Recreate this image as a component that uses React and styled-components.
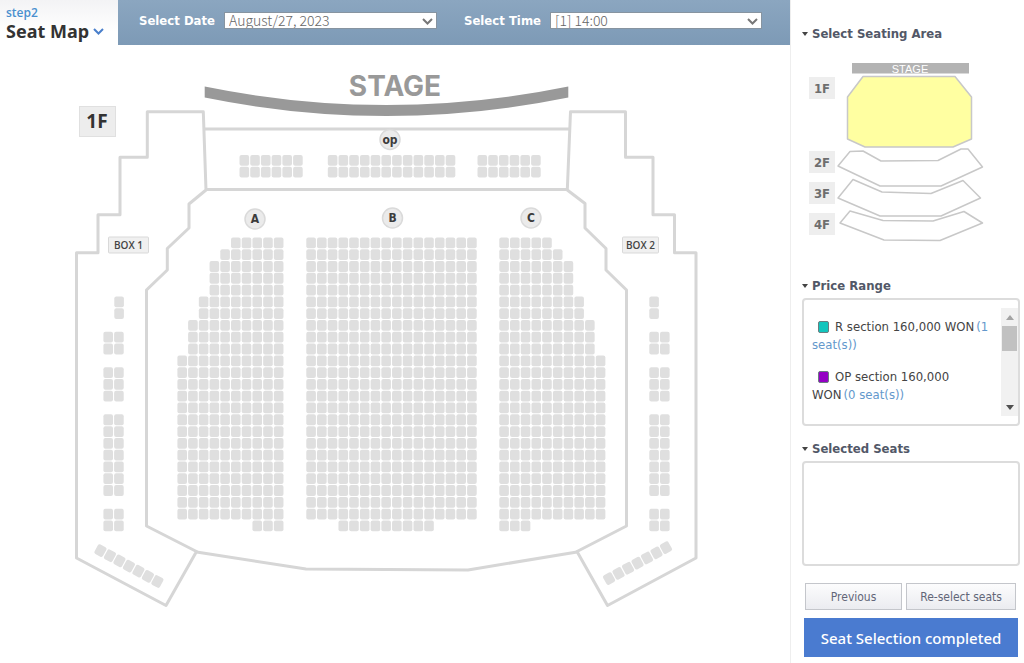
import React, { useState } from "react";
import styled, { createGlobalStyle } from "styled-components";

const GlobalStyle = createGlobalStyle`
  * {
    box-sizing: border-box;
  }
  body {
    margin: 0;
    background: #fff;
    color: #444;
    font-family: "DejaVu Sans Condensed", "DejaVu Sans", sans-serif;
    font-size: 13px;
  }
`;

const Page = styled.div`
  display: flex;
  min-height: 100vh;
`;

const Main = styled.main`
  flex: 1;
  min-width: 0;
`;

const TopBar = styled.header`
  display: flex;
  height: 45px;
`;

const Step = styled.div`
  flex: none;
  width: 118px;
  padding: 5px 0 0 6px;
  background: linear-gradient(#f3f3f5, #fff 32px);
`;

const StepNumber = styled.div`
  font-family: "Open Sans", sans-serif;
  font-size: 12px;
  font-weight: 600;
  line-height: 16px;
  color: #4a90cf;
`;

const StepTitle = styled.h1`
  display: flex;
  align-items: center;
  gap: 4px;
  margin: 0;
  font-family: "Noto Sans", sans-serif;
  font-size: 18px;
  font-weight: 700;
  line-height: 20px;
  color: #333;
  white-space: nowrap;
`;

const Filters = styled.div`
  flex: 1;
  display: flex;
  align-items: center;
  gap: 27px;
  min-width: 0;
  padding: 0 27px 4px 21px;
  background: linear-gradient(#8ba6c0, #7d9ab6);
`;

const Field = styled.label`
  flex: 0 1 298px;
  display: flex;
  align-items: center;
  gap: 9px;
  min-width: 0;
  font-size: 13px;
  font-weight: 700;
  color: #fff;
  white-space: nowrap;
`;

const SelectBox = styled.span`
  position: relative;
  flex: 1;
  display: flex;
  min-width: 0;
  svg {
    position: absolute;
    right: 4px;
    top: 6px;
    pointer-events: none;
  }
`;

const Select = styled.select`
  appearance: none;
  width: 100%;
  height: 17px;
  padding: 0 20px 0 4px;
  border: 1px solid #8794a0;
  border-radius: 0;
  background: #fff;
  color: #666;
  font-family: "Noto Sans CJK KR", sans-serif;
  font-size: 14px;
  font-weight: 300;
  line-height: 15px;
`;

const MapSvg = styled.svg`
  display: block;
  width: 100%;
  height: auto;
`;

const Sidebar = styled.aside`
  flex: none;
  width: 234px;
  padding: 25px 4px 0 11px;
  border-left: 1px solid #eee;
`;

const Heading = styled.h2`
  display: flex;
  align-items: center;
  gap: 4px;
  margin: 0 0 3px;
  font-size: 13px;
  font-weight: 700;
  line-height: 18px;
  color: #525868;
  &::before {
    content: "";
    border: 3px solid transparent;
    border-top: 4px solid #444;
    border-bottom: 0;
  }
`;

const MiniMap = styled.div`
  padding: 10px 0 29px;
`;

const Panel = styled.div`
  display: flex;
  height: ${(props) => props.$height}px;
  margin-bottom: ${(props) => props.$after}px;
  border: 2px solid #dcdcdc;
  border-radius: 4px;
`;

const Prices = styled.ul`
  flex: 1;
  display: flex;
  flex-direction: column;
  gap: 14px;
  margin: 8px 0;
  padding: 10px 8px 0;
  overflow: hidden;
  list-style: none;
  line-height: 18px;
`;

const Swatch = styled.span`
  display: inline-block;
  width: 11px;
  height: 12px;
  margin: 0 6px;
  border: 1px solid #6b7d80;
  border-radius: 2px;
  background: ${(props) => props.$color};
  vertical-align: -2px;
`;

const Count = styled.span`
  padding-left: 2px;
  color: #6398cc;
`;

const ScrollBar = styled.div`
  display: flex;
  flex-direction: column;
  width: 17px;
  margin: 8px 0;
  background: #f1f1f1;
`;

const ScrollButton = styled.button`
  display: flex;
  align-items: center;
  justify-content: center;
  height: 18px;
  padding: 0;
  border: 0;
  background: none;
`;

const Thumb = styled.div`
  height: 25px;
  margin: 0 1px auto;
  background: #c1c1c1;
`;

const Actions = styled.div`
  display: flex;
  gap: 4px;
  padding: 0 4px 0 3px;
`;

const Button = styled.button`
  flex: ${(props) => props.$grow} 1 0;
  height: 27px;
  padding: 0;
  border: 1px solid #c4c6cb;
  background: linear-gradient(#fcfcfd, #ebecf0);
  color: #626678;
  font-family: inherit;
  font-size: 12px;
`;

const Submit = styled.button`
  display: block;
  width: calc(100% - 4px);
  height: 39px;
  margin: 8px 2px 6px;
  padding: 0;
  border: 0;
  background: #4a7bd0;
  color: #fff;
  font-family: "Noto Sans", sans-serif;
  font-size: 15px;
  font-weight: 500;
`;

const COL = 10.72;
const ROW = 11.79;
const TOP = 237.5;

const wing = [5, 6, 7, 7, 7, 8, 8, 9, 9, 9, ...Array(14).fill(10), 3];
const seats = [];

const addRow = (x, y, count) => {
  for (let i = 0; i < count; i++) seats.push([x + i * COL, y]);
};

// stalls A, B and C
wing.forEach((count, row) => {
  const y = TOP + row * ROW;
  addRow(284.6 - count * COL, y, count);
  addRow(499.3, y, count);
  if (row < 24) addRow(306.3, y, 16);
  else addRow(306.3 + 3 * COL, y, 9);
});

// orchestra pit
[155, 166.8].forEach((y) => {
  addRow(239.5, y, 6);
  addRow(327.8, y, 12);
  addRow(477.5, y, 6);
});

// side boxes
[5, 6].forEach((row) => {
  addRow(114.3, TOP + row * ROW, 1);
  addRow(649.3, TOP + row * ROW, 1);
});
[8, 9, 11, 12, 13, 15, 16, 17, 18, 19, 20, 21, 23, 24].forEach((row) => {
  addRow(103.4, TOP + row * ROW, 2);
  addRow(649.3, TOP + row * ROW, 2);
});

const Chevron = ({ color }) => (
  <svg width="11" height="7" viewBox="0 0 11 7" fill="none" stroke={color} strokeWidth="2">
    <path d="M1 1l4.5 4.5L10 1" />
  </svg>
);

const Seat = ({ x, y }) => <rect x={x} y={y} width="9.6" height="10.8" rx="2" />;

const Badge = ({ x, y, children }) => (
  <g>
    <circle cx={x} cy={y} r="10" fill="#ebebeb" stroke="#dadada" strokeWidth="1.5" />
    <text x={x} y={y + 4} fontSize="12" fontWeight="700" textAnchor="middle" fill="#3c3c3c">
      {children}
    </text>
  </g>
);

const BoxLabel = ({ x, width, children }) => (
  <g>
    <rect x={x} y="237" width={width} height="16" rx="1" fill="#f0f0f0" stroke="#d9d9d9" />
    <text x={x + width / 2} y="249" fontFamily="Open Sans" fontSize="10" fontWeight="600" textAnchor="middle" fill="#444">
      {children}
    </text>
  </g>
);

const SeatMap = () => (
  <MapSvg viewBox="0 45 790 618" role="img" aria-label="Seat map, first floor">
    <text x="395" y="96" fontFamily="Inter" fontSize="28" fontWeight="700" textAnchor="middle" fill="#999">
      STAGE
    </text>
    <path d="M204.7 86.5Q386.5 123.5 568.3 86.5V97.5Q386.5 134.5 204.7 97.5Z" fill="#999" />
    <rect x="79.5" y="106.5" width="36" height="30" fill="#ededed" stroke="#e0e0e0" />
    <text x="97" y="128" fontFamily="Noto Sans" fontSize="19" fontWeight="700" textAnchor="middle" fill="#333">
      1F
    </text>
    <g fill="none" stroke="#d6d6d6" strokeWidth="3" strokeLinejoin="round">
      <path d="M147.3 111.7H203.3L206 190L189 204V228L167.3 248.5V270L146.5 290V526L196.5 551.5L166 605.5L76.5 558V252.7H98V214.7H120V157.3H147.3Z" />
      <path d="M625.5 111.7H570.5L567.3 190L585 203.5V228L606 248.5V270L626.5 290V526L577 551.5L607.5 605.5L696 558V252.7H674.5V214.7H653V157.3H625.5Z" />
      <path d="M204 129H569M206 189.5H567M196.5 552L306 569L468 570L577 552" />
    </g>
    <g fill="#dfdfdf">
      {seats.map(([x, y]) => (
        <Seat key={`${x}-${y}`} x={x} y={y} />
      ))}
      <g transform="translate(100.5 550.5) rotate(28.5)">
        {[0, 1, 2, 3, 4, 5, 6].map((i) => (
          <Seat key={i} x={i * 10.8 - 4.8} y={-5.3} />
        ))}
      </g>
      <g transform="translate(609 578.5) rotate(-28.5)">
        {[0, 1, 2, 3, 4, 5, 6].map((i) => (
          <Seat key={i} x={i * 10.8 - 4.8} y={-5.3} />
        ))}
      </g>
    </g>
    <Badge x={390} y={139.5}>op</Badge>
    <Badge x={255} y={219}>A</Badge>
    <Badge x={392.5} y={218}>B</Badge>
    <Badge x={531} y={218}>C</Badge>
    <BoxLabel x={108.5} width={40}>BOX 1</BoxLabel>
    <BoxLabel x={622.5} width={36}>BOX 2</BoxLabel>
  </MapSvg>
);

const floors = [
  { name: "1F", y: 77, points: "863,76.5 955,76.5 971.5,97 971.5,139 953,147 865,147 847.5,139 847.5,97" },
  { name: "2F", y: 151, points: "838,166 850,151.5 863,151 881,161 938,160.5 961,149 968,149 982.5,167 941,186 880,186" },
  { name: "3F", y: 182, points: "838,198 853,179.5 882,192 931,193.5 963,180.5 980.5,198 941,216 880,216" },
  { name: "4F", y: 213, points: "840,223 850,211 883,220.5 933,221 964,211.5 982.5,223 940,240.5 884,240" },
];

const FloorMap = () => (
  <MapSvg viewBox="802 56 218 192" role="img" aria-label="Seating areas">
    <rect x="852" y="63" width="117" height="10.5" fill="#b3b3b3" />
    <text x="910" y="73" fontFamily="Liberation Sans" fontSize="11" textAnchor="middle" fill="#fff">
      STAGE
    </text>
    {floors.map((floor) => (
      <g key={floor.name}>
        <rect x="809" y={floor.y} width="26" height="22" fill="#eee" />
        <text x="822" y={floor.y + 16} fontSize="13" fontWeight="700" textAnchor="middle" fill="#6e6e6e">
          {floor.name}
        </text>
        <polygon
          points={floor.points}
          fill={floor.name === "1F" ? "#ffffa1" : "#fff"}
          stroke="#c8c8c8"
          strokeWidth="1.5"
          strokeLinejoin="round"
        />
      </g>
    ))}
  </MapSvg>
);

const prices = [
  { name: "R section 160,000 WON", count: 1, color: "#12c5bd" },
  { name: "OP section 160,000 WON", count: 0, color: "#9400c4" },
];

export default function App() {
  const [date, setDate] = useState("August/27, 2023");
  const [time, setTime] = useState("[1] 14:00");

  return (
    <Page>
      <GlobalStyle />
      <Main>
        <TopBar>
          <Step>
            <StepNumber>step2</StepNumber>
            <StepTitle>
              Seat Map <Chevron color="#4a7fcb" />
            </StepTitle>
          </Step>
          <Filters>
            <Field>
              Select Date
              <SelectBox>
                <Select value={date} onChange={(e) => setDate(e.target.value)}>
                  <option>August/27, 2023</option>
                </Select>
                <Chevron color="#777" />
              </SelectBox>
            </Field>
            <Field>
              Select Time
              <SelectBox>
                <Select value={time} onChange={(e) => setTime(e.target.value)}>
                  <option>[1] 14:00</option>
                </Select>
                <Chevron color="#777" />
              </SelectBox>
            </Field>
          </Filters>
        </TopBar>
        <SeatMap />
      </Main>
      <Sidebar>
        <Heading>Select Seating Area</Heading>
        <MiniMap>
          <FloorMap />
        </MiniMap>
        <Heading>Price Range</Heading>
        <Panel $height={128} $after={14}>
          <Prices>
            {prices.map((price) => (
              <li key={price.name}>
                <Swatch $color={price.color} />
                {price.name}
                <Count>({price.count} seat(s))</Count>
              </li>
            ))}
          </Prices>
          <ScrollBar>
            <ScrollButton type="button" aria-label="Scroll up">
              <svg width="8" height="5"><path d="M0 5l4-5 4 5z" fill="#a3a3a3" /></svg>
            </ScrollButton>
            <Thumb />
            <ScrollButton type="button" aria-label="Scroll down">
              <svg width="8" height="5"><path d="M0 0l4 5 4-5z" fill="#505050" /></svg>
            </ScrollButton>
          </ScrollBar>
        </Panel>
        <Heading>Selected Seats</Heading>
        <Panel $height={105} $after={17} />
        <Actions>
          <Button type="button" $grow={97}>Previous</Button>
          <Button type="button" $grow={110}>Re-select seats</Button>
        </Actions>
        <Submit type="button">Seat Selection completed</Submit>
      </Sidebar>
    </Page>
  );
}
